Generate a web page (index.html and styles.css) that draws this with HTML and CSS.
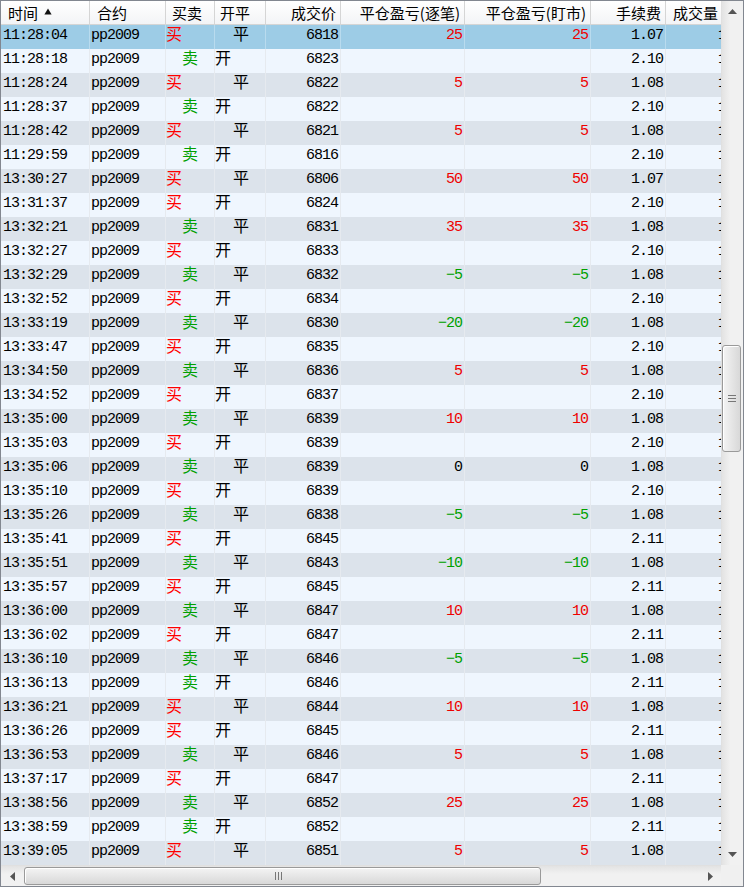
FILE: index.html
```html
<!DOCTYPE html>
<html lang="zh-CN">
<head>
<meta charset="utf-8">
<title>成交记录</title>
<link rel="stylesheet" href="styles.css">
</head>
<body>
<div class="frame">
  <div class="view">
    <div class="head">
      <div class="h h-left">时间<svg class="sort" width="8" height="7" viewBox="0 0 8 7"><path d="M4 0.5 L7.6 6.5 L0.4 6.5 Z" fill="#111"/></svg></div>
      <div class="h h-left">合约</div>
      <div class="h h-left h-bs">买卖</div>
      <div class="h h-left h-oc">开平</div>
      <div class="h h-right">成交价</div>
      <div class="h h-right">平仓盈亏(逐笔)</div>
      <div class="h h-right">平仓盈亏(盯市)</div>
      <div class="h h-right">手续费</div>
      <div class="h h-left">成交量</div>
    </div>
    <div class="body">
      <div class="row sel"><div class="c t">11:28:04</div><div class="c s">pp2009</div><div class="c k buy">买</div><div class="c k close">平</div><div class="c n">6818</div><div class="c n red">25</div><div class="c n red">25</div><div class="c n">1.07</div><div class="c v">1</div></div>
      <div class="row lt"><div class="c t">11:28:18</div><div class="c s">pp2009</div><div class="c k sell">卖</div><div class="c k open">开</div><div class="c n">6823</div><div class="c n"></div><div class="c n"></div><div class="c n">2.10</div><div class="c v">1</div></div>
      <div class="row gy"><div class="c t">11:28:24</div><div class="c s">pp2009</div><div class="c k buy">买</div><div class="c k close">平</div><div class="c n">6822</div><div class="c n red">5</div><div class="c n red">5</div><div class="c n">1.08</div><div class="c v">1</div></div>
      <div class="row lt"><div class="c t">11:28:37</div><div class="c s">pp2009</div><div class="c k sell">卖</div><div class="c k open">开</div><div class="c n">6822</div><div class="c n"></div><div class="c n"></div><div class="c n">2.10</div><div class="c v">1</div></div>
      <div class="row gy"><div class="c t">11:28:42</div><div class="c s">pp2009</div><div class="c k buy">买</div><div class="c k close">平</div><div class="c n">6821</div><div class="c n red">5</div><div class="c n red">5</div><div class="c n">1.08</div><div class="c v">1</div></div>
      <div class="row lt"><div class="c t">11:29:59</div><div class="c s">pp2009</div><div class="c k sell">卖</div><div class="c k open">开</div><div class="c n">6816</div><div class="c n"></div><div class="c n"></div><div class="c n">2.10</div><div class="c v">1</div></div>
      <div class="row gy"><div class="c t">13:30:27</div><div class="c s">pp2009</div><div class="c k buy">买</div><div class="c k close">平</div><div class="c n">6806</div><div class="c n red">50</div><div class="c n red">50</div><div class="c n">1.07</div><div class="c v">1</div></div>
      <div class="row lt"><div class="c t">13:31:37</div><div class="c s">pp2009</div><div class="c k buy">买</div><div class="c k open">开</div><div class="c n">6824</div><div class="c n"></div><div class="c n"></div><div class="c n">2.10</div><div class="c v">1</div></div>
      <div class="row gy"><div class="c t">13:32:21</div><div class="c s">pp2009</div><div class="c k sell">卖</div><div class="c k close">平</div><div class="c n">6831</div><div class="c n red">35</div><div class="c n red">35</div><div class="c n">1.08</div><div class="c v">1</div></div>
      <div class="row lt"><div class="c t">13:32:27</div><div class="c s">pp2009</div><div class="c k buy">买</div><div class="c k open">开</div><div class="c n">6833</div><div class="c n"></div><div class="c n"></div><div class="c n">2.10</div><div class="c v">1</div></div>
      <div class="row gy"><div class="c t">13:32:29</div><div class="c s">pp2009</div><div class="c k sell">卖</div><div class="c k close">平</div><div class="c n">6832</div><div class="c n grn">−5</div><div class="c n grn">−5</div><div class="c n">1.08</div><div class="c v">1</div></div>
      <div class="row lt"><div class="c t">13:32:52</div><div class="c s">pp2009</div><div class="c k buy">买</div><div class="c k open">开</div><div class="c n">6834</div><div class="c n"></div><div class="c n"></div><div class="c n">2.10</div><div class="c v">1</div></div>
      <div class="row gy"><div class="c t">13:33:19</div><div class="c s">pp2009</div><div class="c k sell">卖</div><div class="c k close">平</div><div class="c n">6830</div><div class="c n grn">−20</div><div class="c n grn">−20</div><div class="c n">1.08</div><div class="c v">1</div></div>
      <div class="row lt"><div class="c t">13:33:47</div><div class="c s">pp2009</div><div class="c k buy">买</div><div class="c k open">开</div><div class="c n">6835</div><div class="c n"></div><div class="c n"></div><div class="c n">2.10</div><div class="c v">1</div></div>
      <div class="row gy"><div class="c t">13:34:50</div><div class="c s">pp2009</div><div class="c k sell">卖</div><div class="c k close">平</div><div class="c n">6836</div><div class="c n red">5</div><div class="c n red">5</div><div class="c n">1.08</div><div class="c v">1</div></div>
      <div class="row lt"><div class="c t">13:34:52</div><div class="c s">pp2009</div><div class="c k buy">买</div><div class="c k open">开</div><div class="c n">6837</div><div class="c n"></div><div class="c n"></div><div class="c n">2.10</div><div class="c v">1</div></div>
      <div class="row gy"><div class="c t">13:35:00</div><div class="c s">pp2009</div><div class="c k sell">卖</div><div class="c k close">平</div><div class="c n">6839</div><div class="c n red">10</div><div class="c n red">10</div><div class="c n">1.08</div><div class="c v">1</div></div>
      <div class="row lt"><div class="c t">13:35:03</div><div class="c s">pp2009</div><div class="c k buy">买</div><div class="c k open">开</div><div class="c n">6839</div><div class="c n"></div><div class="c n"></div><div class="c n">2.10</div><div class="c v">1</div></div>
      <div class="row gy"><div class="c t">13:35:06</div><div class="c s">pp2009</div><div class="c k sell">卖</div><div class="c k close">平</div><div class="c n">6839</div><div class="c n">0</div><div class="c n">0</div><div class="c n">1.08</div><div class="c v">1</div></div>
      <div class="row lt"><div class="c t">13:35:10</div><div class="c s">pp2009</div><div class="c k buy">买</div><div class="c k open">开</div><div class="c n">6839</div><div class="c n"></div><div class="c n"></div><div class="c n">2.10</div><div class="c v">1</div></div>
      <div class="row gy"><div class="c t">13:35:26</div><div class="c s">pp2009</div><div class="c k sell">卖</div><div class="c k close">平</div><div class="c n">6838</div><div class="c n grn">−5</div><div class="c n grn">−5</div><div class="c n">1.08</div><div class="c v">1</div></div>
      <div class="row lt"><div class="c t">13:35:41</div><div class="c s">pp2009</div><div class="c k buy">买</div><div class="c k open">开</div><div class="c n">6845</div><div class="c n"></div><div class="c n"></div><div class="c n">2.11</div><div class="c v">1</div></div>
      <div class="row gy"><div class="c t">13:35:51</div><div class="c s">pp2009</div><div class="c k sell">卖</div><div class="c k close">平</div><div class="c n">6843</div><div class="c n grn">−10</div><div class="c n grn">−10</div><div class="c n">1.08</div><div class="c v">1</div></div>
      <div class="row lt"><div class="c t">13:35:57</div><div class="c s">pp2009</div><div class="c k buy">买</div><div class="c k open">开</div><div class="c n">6845</div><div class="c n"></div><div class="c n"></div><div class="c n">2.11</div><div class="c v">1</div></div>
      <div class="row gy"><div class="c t">13:36:00</div><div class="c s">pp2009</div><div class="c k sell">卖</div><div class="c k close">平</div><div class="c n">6847</div><div class="c n red">10</div><div class="c n red">10</div><div class="c n">1.08</div><div class="c v">1</div></div>
      <div class="row lt"><div class="c t">13:36:02</div><div class="c s">pp2009</div><div class="c k buy">买</div><div class="c k open">开</div><div class="c n">6847</div><div class="c n"></div><div class="c n"></div><div class="c n">2.11</div><div class="c v">1</div></div>
      <div class="row gy"><div class="c t">13:36:10</div><div class="c s">pp2009</div><div class="c k sell">卖</div><div class="c k close">平</div><div class="c n">6846</div><div class="c n grn">−5</div><div class="c n grn">−5</div><div class="c n">1.08</div><div class="c v">1</div></div>
      <div class="row lt"><div class="c t">13:36:13</div><div class="c s">pp2009</div><div class="c k sell">卖</div><div class="c k open">开</div><div class="c n">6846</div><div class="c n"></div><div class="c n"></div><div class="c n">2.11</div><div class="c v">1</div></div>
      <div class="row gy"><div class="c t">13:36:21</div><div class="c s">pp2009</div><div class="c k buy">买</div><div class="c k close">平</div><div class="c n">6844</div><div class="c n red">10</div><div class="c n red">10</div><div class="c n">1.08</div><div class="c v">1</div></div>
      <div class="row lt"><div class="c t">13:36:26</div><div class="c s">pp2009</div><div class="c k buy">买</div><div class="c k open">开</div><div class="c n">6845</div><div class="c n"></div><div class="c n"></div><div class="c n">2.11</div><div class="c v">1</div></div>
      <div class="row gy"><div class="c t">13:36:53</div><div class="c s">pp2009</div><div class="c k sell">卖</div><div class="c k close">平</div><div class="c n">6846</div><div class="c n red">5</div><div class="c n red">5</div><div class="c n">1.08</div><div class="c v">1</div></div>
      <div class="row lt"><div class="c t">13:37:17</div><div class="c s">pp2009</div><div class="c k buy">买</div><div class="c k open">开</div><div class="c n">6847</div><div class="c n"></div><div class="c n"></div><div class="c n">2.11</div><div class="c v">1</div></div>
      <div class="row gy"><div class="c t">13:38:56</div><div class="c s">pp2009</div><div class="c k sell">卖</div><div class="c k close">平</div><div class="c n">6852</div><div class="c n red">25</div><div class="c n red">25</div><div class="c n">1.08</div><div class="c v">1</div></div>
      <div class="row lt"><div class="c t">13:38:59</div><div class="c s">pp2009</div><div class="c k sell">卖</div><div class="c k open">开</div><div class="c n">6852</div><div class="c n"></div><div class="c n"></div><div class="c n">2.11</div><div class="c v">1</div></div>
      <div class="row gy"><div class="c t">13:39:05</div><div class="c s">pp2009</div><div class="c k buy">买</div><div class="c k close">平</div><div class="c n">6851</div><div class="c n red">5</div><div class="c n red">5</div><div class="c n">1.08</div><div class="c v">1</div></div>
    </div>
  </div>
  <div class="vscroll">
    <div class="arrow up"><svg width="9" height="5" viewBox="0 0 9 5"><path d="M4.5 0 L9 5 L0 5 Z" fill="#555"/></svg></div>
    <div class="vtrack">
      <div class="vthumb"><svg width="8" height="7" viewBox="0 0 8 7"><path d="M0 0.5H8M0 3.5H8M0 6.5H8" stroke="#777" stroke-width="1"/></svg></div>
    </div>
    <div class="arrow down"><svg width="9" height="5" viewBox="0 0 9 5"><path d="M0 0 L9 0 L4.5 5 Z" fill="#555"/></svg></div>
  </div>
  <div class="hscroll">
    <div class="arrow left"><svg width="5" height="9" viewBox="0 0 5 9"><path d="M5 0 L5 9 L0 4.5 Z" fill="#555"/></svg></div>
    <div class="htrack">
      <div class="hthumb"><svg width="7" height="8" viewBox="0 0 7 8"><path d="M0.5 0V8M3.5 0V8M6.5 0V8" stroke="#777" stroke-width="1"/></svg></div>
    </div>
    <div class="arrow right"><svg width="5" height="9" viewBox="0 0 5 9"><path d="M0 0 L5 4.5 L0 9 Z" fill="#555"/></svg></div>
  </div>
  <div class="corner"></div>
</div>
</body>
</html>
```

FILE: styles.css
```css
html, body {
  margin: 0;
  padding: 0;
  background: #ffffff;
}

.frame {
  width: 744px;
  height: 887px;
  box-sizing: border-box;
  border: 1px solid #828790;
  display: grid;
  grid-template-columns: 720px 22px;
  grid-template-rows: 864px 21px;
  background: #f0f0f0;
}

.view {
  overflow: hidden;
  background: #ffffff;
}

.head,
.row {
  display: grid;
  grid-template-columns: 89px 76px 49px 51px 75px 124px 126px 75px 70px;
  width: 735px;
}

.head {
  height: 24px;
  box-sizing: border-box;
  border-bottom: 1px solid #d5d5d5;
  background: linear-gradient(#ffffff, #f3f4f6);
}

.h {
  box-sizing: border-box;
  border-right: 1px solid #d5d5d5;
  font-family: "Noto Sans CJK SC", "Noto Sans", sans-serif;
  font-size: 15px;
  line-height: 22px;
  color: #000;
  white-space: nowrap;
  display: flex;
  align-items: center;
}

.h-left {
  padding-left: 7px;
}

.h-right {
  justify-content: flex-end;
  padding-right: 4px;
}

.h-bs {
  padding-left: 6px;
}

.h-oc {
  padding-left: 5px;
}

.sort {
  margin-left: 6px;
  margin-top: -2px;
}

.row {
  height: 24px;
}

.row.sel {
  background: #9dcce6;
}

.row.lt {
  background: #eff6fe;
}

.row.gy {
  background: #dce3eb;
}

.c {
  box-sizing: border-box;
  border-right: 1px solid #e6eaef;
  font-family: "Liberation Mono", "Noto Sans CJK SC", monospace;
  font-size: 15px;
  letter-spacing: -1px;
  line-height: 21px;
  color: #000;
  white-space: nowrap;
}

.row.sel .c {
  border-right-color: #b9dbee;
}

.t {
  padding-left: 2px;
}

.s {
  padding-left: 1px;
}

.n {
  text-align: right;
  padding-right: 2px;
}

.v {
  padding-left: 52px;
}

.k {
  font-family: "Noto Sans CJK SC", sans-serif;
  font-size: 16px;
  letter-spacing: 0;
  line-height: 17px;
}

.buy {
  color: #ff0000;
  padding-left: 0;
}

.sell {
  color: #00a000;
  padding-left: 16px;
}

.open {
  padding-left: 0;
}

.close {
  padding-left: 18px;
}

.red {
  color: #ee0000;
}

.grn {
  color: #00a000;
}

/* scrollbars */
.vscroll {
  display: flex;
  flex-direction: column;
  background: linear-gradient(to right, #e3e3e3, #f1f1f1 40%, #f1f1f1);
  border-left: 1px solid #e0e0e0;
  box-sizing: border-box;
}

.arrow {
  display: flex;
  align-items: center;
  justify-content: center;
}

.up,
.down {
  height: 21px;
}

.vtrack {
  flex: 1;
  padding-top: 323px;
}

.vthumb {
  width: 19px;
  height: 107px;
  box-sizing: border-box;
  border: 1px solid #9a9a9a;
  border-radius: 3px;
  background: linear-gradient(to right, #f4f4f4, #e6e6e6 50%, #d8d8d8);
  box-shadow: inset 1px 1px 0 #ffffff;
  display: flex;
  align-items: center;
  justify-content: center;
}

.hscroll {
  display: flex;
  background: linear-gradient(#e3e3e3, #f1f1f1 40%, #f1f1f1);
  border-top: 1px solid #e0e0e0;
  box-sizing: border-box;
}

.left,
.right {
  width: 22px;
}

.htrack {
  flex: 1;
  padding-left: 1px;
  display: flex;
  align-items: center;
}

.hthumb {
  width: 517px;
  height: 18px;
  box-sizing: border-box;
  border: 1px solid #9a9a9a;
  border-radius: 3px;
  background: linear-gradient(#f4f4f4, #e6e6e6 50%, #d8d8d8);
  box-shadow: inset 1px 1px 0 #ffffff;
  display: flex;
  align-items: center;
  justify-content: flex-start;
  padding-left: 250px;
}

.corner {
  background: #f0f0f0;
}
```
